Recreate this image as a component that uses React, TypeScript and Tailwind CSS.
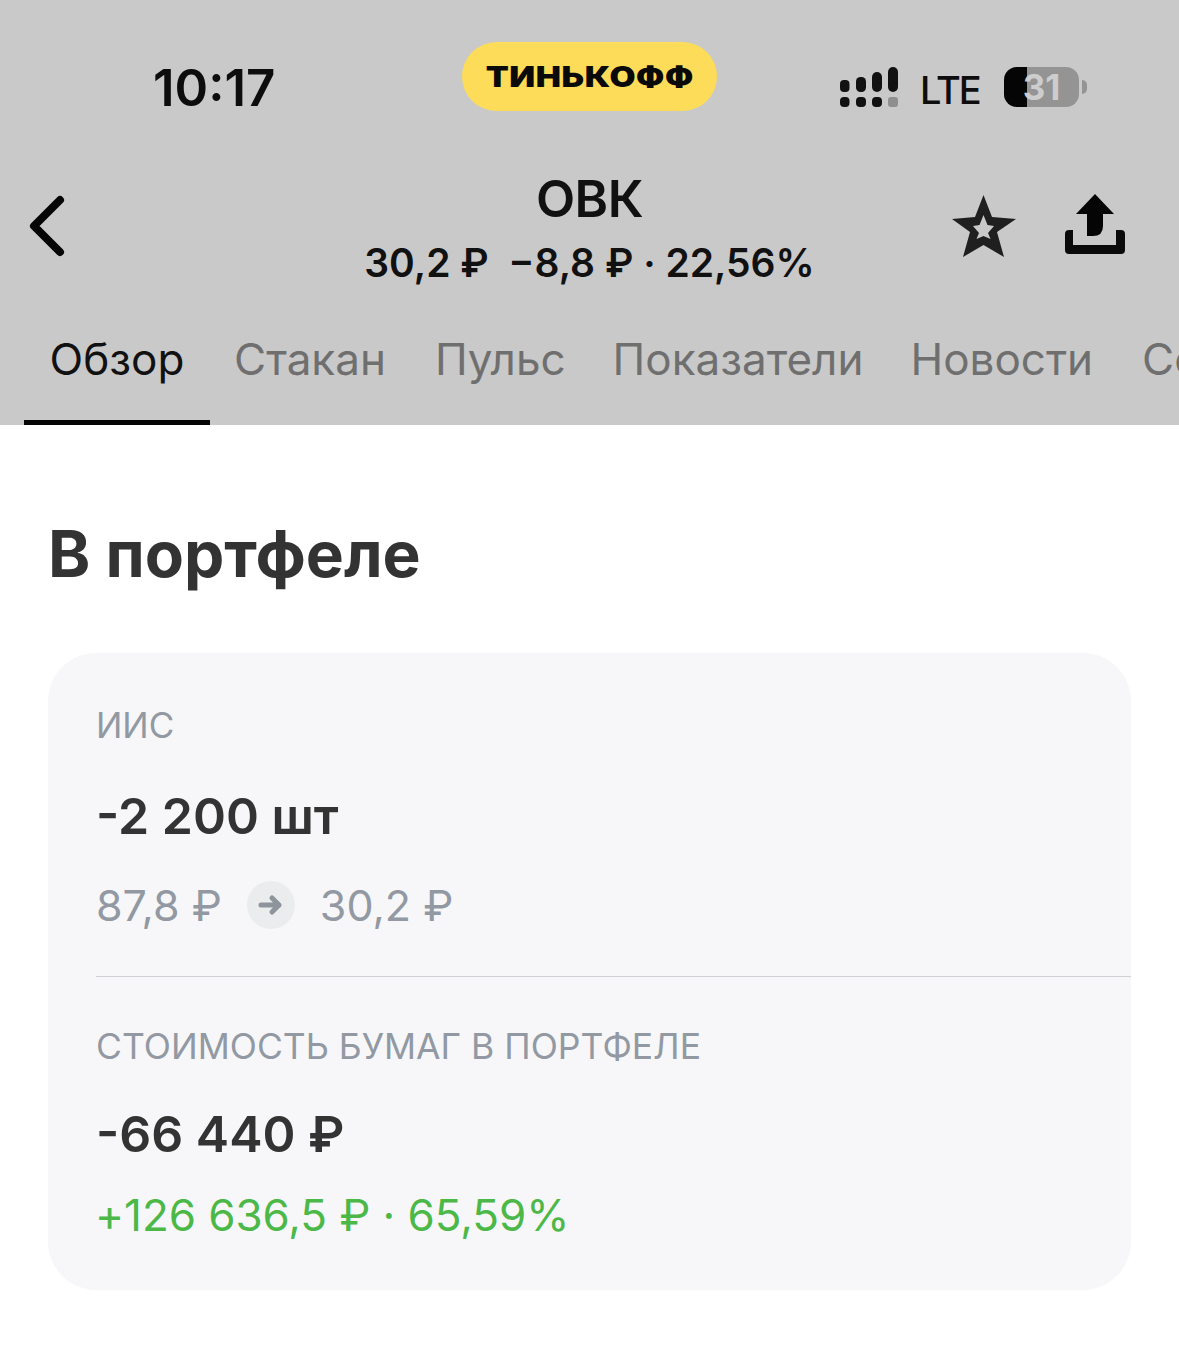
import React from "react";

const F = "font-['Inter','Liberation_Sans',sans-serif]";

function Signal() {
  return (
    <svg width="60" height="42" viewBox="0 0 60 42" className="block">
      <g fill="#111">
        <rect x="0" y="13" width="9.5" height="12" rx="4" />
        <rect x="0" y="30" width="9.5" height="10" rx="4" />
        <rect x="16" y="10" width="10" height="15" rx="4.5" />
        <rect x="16" y="30" width="10" height="10" rx="4" />
        <rect x="32" y="5" width="10" height="20" rx="5" />
        <rect x="32" y="30" width="10" height="10" rx="4" />
        <rect x="48" y="0" width="10" height="25" rx="5" />
        <rect x="48" y="30" width="10" height="10" rx="3" fill="#8f8f8f" />
      </g>
    </svg>
  );
}

function Battery() {
  return (
    <div className="flex items-center gap-[3px]">
      <div className="relative w-[75px] h-[40px] rounded-[13px] bg-[#949494] overflow-hidden">
        <div className="absolute left-0 top-0 bottom-0 w-[23px] bg-[#050505]" />
        <div className="absolute inset-0 flex items-center justify-center text-[35px] font-bold text-[#cdcdcd] leading-none">
          31
        </div>
      </div>
      <div className="w-[5px] h-[14px] rounded-r-full bg-[#949494]" />
    </div>
  );
}

export default function App() {
  return (
    <div className={`${F} w-[1179px] h-[1371px] bg-white overflow-hidden`}>
      <div className="h-[425px] bg-[#c9c9c9] flex flex-col">
        <div className="h-[130px] flex items-start">
          <div className="w-[430px] pt-[58px] pl-[153px] text-[51px] leading-[60px] font-semibold text-[#0d0d0d]">
            10:17
          </div>
          <div className="mt-[42px] ml-[32px] w-[255px] h-[69px] rounded-full bg-[#fcdc58] flex items-center justify-center">
            <span className="font-black text-[28px] tracking-[0.5px] text-[#0a0a0a] uppercase scale-x-[1.2]">
              тинькофф
            </span>
          </div>
          <div className="mt-[67px] ml-[123px] flex items-start">
            <Signal />
            <span className="ml-[20px] mr-[23px] mt-[2px] w-[61px] text-[38px] leading-[42px] font-medium text-[#0d0d0d] tracking-[-2px]">LTE</span>
            <Battery />
          </div>
        </div>
        <div className="h-[175px] relative">
          <div className="flex flex-col items-center pt-[39px]">
            <div className="text-[51px] leading-[60px] font-semibold text-[#111] tracking-[-0.5px]">ОВК</div>
            <div className="text-[39px] leading-[46px] font-semibold text-[#111] mt-[11px] whitespace-pre">
              30,2 ₽  −8,8 ₽ · 22,56%
            </div>
          </div>
          <svg className="absolute left-[28px] top-[60px]" width="40" height="72" viewBox="0 0 40 72" fill="none">
            <path d="M32 10 L6 36 L32 62" stroke="#050505" strokeWidth="8" strokeLinecap="round" strokeLinejoin="round" />
          </svg>
          <svg className="absolute left-[950px] top-[60px]" width="68" height="70" viewBox="0 0 68 70">
            <path
              fillRule="evenodd"
              fill="#1f1f1f"
              d="M33.5 5 L42 27 L66 29 L47 42 L54 67 L33.5 55 L13 67 L20 42 L2 29 L25 27 Z M33.5 25 L29.5 35 L23 36 L29 43 L26.5 49 L33.5 46 L40.5 49 L38 43 L44 36 L37.5 35 Z"
            />
          </svg>
          <svg className="absolute left-[1064px] top-[60px]" width="62" height="66" viewBox="0 0 62 66">
            <path d="M31 4 L50 24 H39 V36 Q39 46 29 46 H23 V24 H12 Z" fill="#050505" />
            <path d="M1 44 Q1 40 5 40 H9 V55 H52 V40 H57 Q61 40 61 44 V60 Q61 64 57 64 H5 Q1 64 1 60 Z" fill="#0a0a0a" />
          </svg>
        </div>
        <div className="h-[120px] flex items-start overflow-hidden whitespace-nowrap text-[44px] leading-[52px] text-[#6f6f6f]">
          <div className="ml-[24px] w-[186px] h-[120px] pt-[28px] relative flex justify-center text-[#111] shrink-0">
            <span>Обзор</span>
            <div className="absolute left-0 bottom-0 w-[186px] h-[5px] bg-[#050505]" />
          </div>
          <span className="ml-[24px] mt-[28px]">Стакан</span>
          <span className="ml-[49px] mt-[28px]">Пульс</span>
          <span className="ml-[47px] mt-[28px]">Показатели</span>
          <span className="ml-[47px] mt-[28px]">Новости</span>
          <span className="ml-[49px] mt-[28px]">События</span>
        </div>
      </div>

      <div className="px-[48px]">
        <h2 className="mt-[93px] text-[64px] leading-[72px] font-bold text-[#333333]">В портфеле</h2>
        <div className="mt-[63px] h-[637px] rounded-[48px] bg-[#f7f7fa] pl-[48px] pt-[51px]">
          <div className="text-[35px] leading-[42px] text-[#9299a2]">ИИС</div>
          <div className="mt-[39px] text-[50px] leading-[62px] font-semibold text-[#333333]">-2 200 шт</div>
          <div className="mt-[32px] flex items-center text-[43px] leading-[52px] text-[#9299a2]">
            <span>87,8 ₽</span>
            <span className="mx-[25px] w-[48px] h-[48px] rounded-full bg-[#eaecee] flex items-center justify-center">
              <svg width="26" height="22" viewBox="0 0 26 22" fill="none">
                <path d="M3 11 H21 M14 4 L21 11 L14 18" stroke="#8d949c" strokeWidth="5" strokeLinecap="round" strokeLinejoin="round" />
              </svg>
            </span>
            <span>30,2 ₽</span>
          </div>
          <div className="mt-[45px] h-[1px] bg-[#cfd0d3]" />
          <div className="mt-[49px] text-[35.5px] leading-[42px] text-[#9299a2]">СТОИМОСТЬ БУМАГ В ПОРТФЕЛЕ</div>
          <div className="mt-[35px] text-[50px] leading-[62px] font-semibold text-[#333333]">-66 440 ₽</div>
          <div className="mt-[24px] text-[44px] leading-[52px] text-[#4cb848] -ml-[1px] tracking-[-0.05px]">+126 636,5 ₽ · 65,59%</div>
        </div>
      </div>
    </div>
  );
}
